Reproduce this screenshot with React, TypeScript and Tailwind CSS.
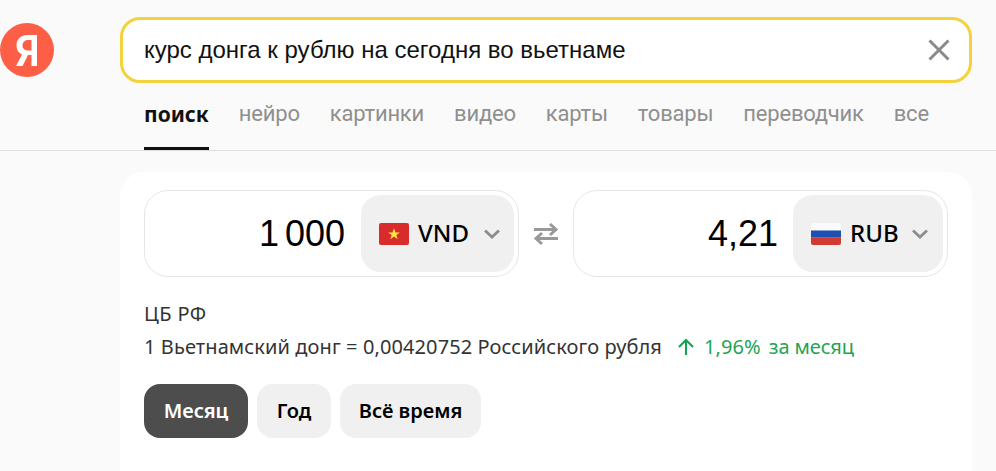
const FONT = "font-['Noto_Sans','Open_Sans',sans-serif]";

function Chevron({ margin }: { margin: string }) {
  return (
    <svg width="18" height="18" viewBox="0 0 18 18" fill="none" className={margin}>
      <path d="M2 5.5 9 12l7-6.5" stroke="#8c8c8c" strokeWidth="2.8" />
    </svg>
  );
}

function VnFlag() {
  return (
    <svg width="30" height="22" viewBox="0 0 30 22">
      <rect width="30" height="22" rx="2" fill="#d92b2b" />
      <path d="M15 5.2l1.5 4.2h4.4l-3.6 2.6 1.4 4.3-3.7-2.7-3.7 2.7 1.4-4.3-3.6-2.6h4.4z" fill="#fdea3b" />
    </svg>
  );
}

function RuFlag() {
  return (
    <svg width="30" height="22" viewBox="0 0 30 22">
      <rect width="30" height="22" rx="2" fill="#f1f1f1" />
      <rect y="7.3" width="30" height="7.4" fill="#1f4fb0" />
      <path d="M0 14.7h30V20a2 2 0 0 1-2 2H2a2 2 0 0 1-2-2z" fill="#d13a33" />
      <path d="M0 2a2 2 0 0 1 2-2h26a2 2 0 0 1 2 2v5.3H0z" fill="#fafafa" />
    </svg>
  );
}

function Converter({
  value,
  code,
  flag,
  selectClass,
  numberClass,
  chevronMargin,
}: {
  value: string;
  code: string;
  flag: React.ReactNode;
  selectClass: string;
  numberClass: string;
  chevronMargin: string;
}) {
  return (
    <div className="flex h-[87px] w-[375px] items-center justify-end rounded-[24px] border border-[#e6e6e6] bg-white pr-[4px]">
      <span className={`font-['Liberation_Sans',sans-serif] text-[36px] leading-none text-black [word-spacing:-4px] ${numberClass}`}>{value}</span>
      <div className={`flex h-[77px] items-center rounded-[20px] bg-[#f0f0f0] ${selectClass}`}>
        <span className="flex">{flag}</span>
        <span className="ml-[9px] pb-[2px] text-[24px] leading-none font-medium text-black">{code}</span>
        <Chevron margin={chevronMargin} />
      </div>
    </div>
  );
}

const TABS = ["нейро", "картинки", "видео", "карты", "товары", "переводчик", "все"];

export default function App() {
  return (
    <div className={`h-[471px] w-[996px] overflow-hidden bg-[#fafafa] ${FONT}`}>
      <header className="h-[151px] border-b border-[#dedede]">
        <div className="flex pt-[17px]">
          <div className="mt-[6px] h-[54px] w-[54px]">
            <svg width="54" height="54" viewBox="0 0 54 54">
              <circle cx="27" cy="27" r="27" fill="#fc5f45" />
              <path
                fillRule="evenodd"
                fill="#fff"
                d="M37 43V12H28C21 12 16.5 16 16.5 22.5C16.5 27 18.5 30 22 31.5L16 43H22.5L28 32H31.5V43ZM31.5 17H28.5C25 17 22.5 19 22.5 22.5C22.5 26 25 27.5 28.5 27.5H31.5Z"
              />
            </svg>
          </div>
          <div className="ml-[66px] flex h-[66px] w-[852px] items-center justify-between rounded-[20px] border-[3px] border-[#f4d23c] bg-white pr-[19px] pl-[21px]">
            <span className="font-['Liberation_Sans',sans-serif] text-[24px] leading-none text-[#111]">курс донга к рублю на сегодня во вьетнаме</span>
            <svg width="22" height="22" viewBox="0 0 22 22" fill="none">
              <path d="M1.5 1.5l19 19M20.5 1.5l-19 19" stroke="#8a8a8a" strokeWidth="3" />
            </svg>
          </div>
        </div>
        <nav className="mt-[15px] ml-[144px] flex h-[52px] gap-[30px] font-['Roboto',sans-serif] text-[22px]">
          <div className="flex h-full flex-col items-center justify-between border-b-[3px] border-[#111] pt-[1px]">
            <span className="font-['Noto_Sans',sans-serif] text-[21px] leading-[30px] font-bold text-[#111]">поиск</span>
          </div>
          {TABS.map((t) => (
            <span key={t} className="pt-[1px] leading-[30px] tracking-[-0.2px] text-[#8f8f8f]">{t}</span>
          ))}
        </nav>
      </header>
      <main className="mt-[21px] ml-[120px] h-[320px] w-[852px] rounded-[24px] bg-white px-[24px] pt-[18px]">
        <div className="flex items-center">
          <Converter
            value="1 000"
            code="VND"
            flag={<VnFlag />}
            selectClass="w-[153px] pl-[18px]"
            numberClass="mr-[16px]"
            chevronMargin="ml-[14px]"
          />
          <svg width="54" height="26" viewBox="0 0 54 26" fill="none">
            <path d="M15 8.5h21M31 3l6 5.5-6 5.5" stroke="#999" strokeWidth="3" />
            <path d="M39 17.5H18M23 12l-6 5.5 6 5.5" stroke="#999" strokeWidth="3" />
          </svg>
          <Converter
            value="4,21"
            code="RUB"
            flag={<RuFlag />}
            selectClass="w-[150px] pl-[18px]"
            numberClass="mr-[15px]"
            chevronMargin="ml-[12px]"
          />
        </div>
        <p className="mt-[24px] text-[20px] leading-[26px] tracking-[0.4px] text-[#333]">ЦБ РФ</p>
        <div className="mt-[7px] flex items-center text-[20px] leading-[26px] tracking-[0.1px] text-[#333]">
          <span>1 Вьетнамский донг = 0,00420752 Российского рубля</span>
          <svg width="18" height="18" viewBox="0 0 18 18" fill="none" className="ml-[15px]">
            <path d="M9 17V2M2 9l7-7 7 7" stroke="#12a150" strokeWidth="2" />
          </svg>
          <span className="ml-[9px] text-[#1ea555]">1,96%</span>
          <span className="ml-[8px] tracking-[-0.1px] text-[#1ea555]">за месяц</span>
        </div>
        <div className="mt-[24px] flex gap-[9px] text-[20px] font-semibold">
          <button className="h-[54px] w-[104px] rounded-[16px] bg-[#4d4d4d] text-white">Месяц</button>
          <button className="h-[54px] w-[74px] rounded-[16px] bg-[#f0f0f0] text-black">Год</button>
          <button className="h-[54px] w-[141px] rounded-[16px] bg-[#f0f0f0] text-black">Всё время</button>
        </div>
      </main>
    </div>
  );
}
